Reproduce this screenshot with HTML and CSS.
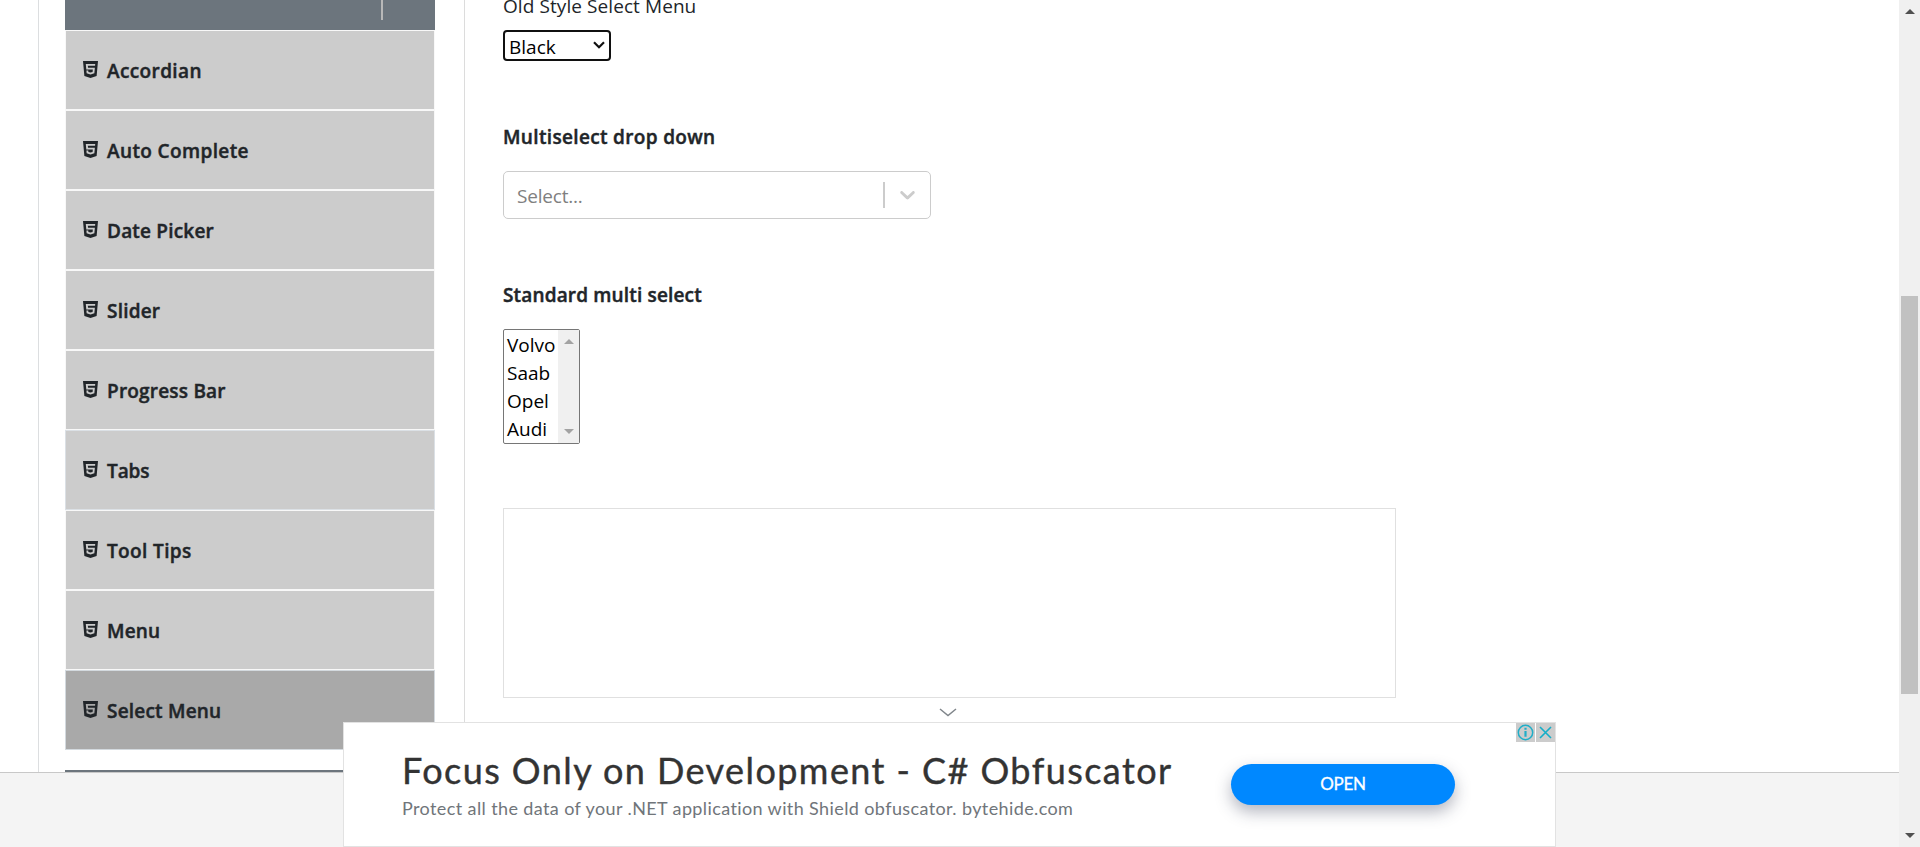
FILE: index.html
```html
<!DOCTYPE html>
<html lang="en">
<head>
<meta charset="utf-8">
<title>Select Menu</title>
<link rel="stylesheet" href="styles.css">
</head>
<body>
<svg class="defs" width="0" height="0" aria-hidden="true">
  <symbol id="html5" viewBox="0 32 384 448" preserveAspectRatio="none"><path d="M0 32l34.9 395.8L191.5 480l157.6-52.2L384 32H0zm308.2 127.9H124.4l4.1 49.4h175.6l-13.6 148.4-97.9 27v.3h-1.1l-98.7-27.3-6-75.8h47.7L138 320l53.5 14.5 53.7-14.5 6-62.2H84.3L71.5 112.2h241.1l-4.4 47.7z"/></symbol>
</svg>
<div class="window">
  <div class="page">
    <div class="main">
      <nav class="sidebar">
        <div class="group-head"><span class="group-divider"></span></div>
        <ul class="menu">
          <li class="item"><svg class="icon"><use href="#html5"/></svg><span class="wide">Accordian</span></li>
          <li class="item"><svg class="icon"><use href="#html5"/></svg><span class="wide">Auto Complete</span></li>
          <li class="item"><svg class="icon"><use href="#html5"/></svg><span>Date Picker</span></li>
          <li class="item"><svg class="icon"><use href="#html5"/></svg><span>Slider</span></li>
          <li class="item"><svg class="icon"><use href="#html5"/></svg><span>Progress Bar</span></li>
          <li class="item visited"><svg class="icon"><use href="#html5"/></svg><span class="tight">Tabs</span></li>
          <li class="item"><svg class="icon"><use href="#html5"/></svg><span class="wide">Tool Tips</span></li>
          <li class="item"><svg class="icon"><use href="#html5"/></svg><span>Menu</span></li>
          <li class="item active"><svg class="icon"><use href="#html5"/></svg><span>Select Menu</span></li>
        </ul>
        <div class="next-group"></div>
      </nav>
      <section class="content">
        <div class="label">Old Style Select Menu</div>
        <div class="old-select"><span>Black</span>
          <svg width="12" height="8" viewBox="0 0 12 8"><path d="M1 1.2l5 5 5-5" fill="none" stroke="#101010" stroke-width="2.2"/></svg>
        </div>
        <div class="heading h-multi">Multiselect drop down</div>
        <div class="combo">
          <span class="placeholder">Select...</span>
          <span class="separator"></span>
          <svg class="combo-arrow" width="25" height="25" viewBox="0 0 20 20"><path fill="#ccc" d="M4.516 7.548c0.436-0.446 1.043-0.481 1.576 0l3.908 3.747 3.908-3.747c0.533-0.481 1.141-0.446 1.574 0 0.436 0.445 0.408 1.197 0 1.615-0.406 0.418-4.695 4.502-4.695 4.502-0.217 0.223-0.502 0.335-0.787 0.335s-0.57-0.112-0.789-0.335c0 0-4.287-4.084-4.695-4.502s-0.436-1.17 0-1.615z"/></svg>
        </div>
        <div class="heading h-standard">Standard multi select</div>
        <div class="listbox">
          <div class="options"><div>Volvo</div><div>Saab</div><div>Opel</div><div>Audi</div></div>
          <div class="list-scroll"><i class="up"></i><i class="down"></i></div>
        </div>
        <div class="frame"></div>
      </section>
    </div>
    <footer class="footer"></footer>
  </div>
  <div class="scrollbar"><i class="up"></i><div class="thumb"></div><i class="down"></i></div>
</div>
<svg class="collapse" width="18" height="9" viewBox="0 0 18 9"><path d="M1 1l8 6.5L17 1" fill="none" stroke="#80868b" stroke-width="1.5"/></svg>
<aside class="ad">
  <div class="ad-text">
    <div class="ad-title">Focus Only on Development - C# Obfuscator</div>
    <div class="ad-sub">Protect all the data of your .NET application with Shield obfuscator. bytehide.com</div>
  </div>
  <div class="ad-button">OPEN</div>
  <div class="ad-controls">
    <svg width="19" height="19" viewBox="0 0 19 19"><circle cx="9.5" cy="9.5" r="7.2" fill="none" stroke="#20aec8" stroke-width="1.5"/><path d="M9.5 8v5.8M9.5 4.8v1.9" stroke="#20aec8" stroke-width="2.2"/></svg>
    <svg width="19" height="19" viewBox="0 0 19 19"><path d="M4 4l11 11M15 4L4 15" fill="none" stroke="#15aec8" stroke-width="1.6"/></svg>
  </div>
</aside>
</body>
</html>
```
FILE: styles.css
```css
* { box-sizing: border-box; }
body { margin: 0; height: 847px; overflow: hidden; background: #fff; color: #212529; font-family: "Open Sans", "Noto Sans", sans-serif; font-size: 19px; line-height: 30px; }
.defs { position: absolute; }
.window { display: flex; height: 847px; }
.page { flex: 1; display: flex; flex-direction: column; }
.main { flex: none; height: 772px; margin-left: 38px; border-left: 1px solid #dcdee0; display: flex; padding-left: 26px; }
.footer { flex: 1; border-top: 1px solid #c8c8c8; background: #f4f4f4; }

.sidebar { width: 370px; display: flex; flex-direction: column; }
.group-head { height: 30px; background: #6c757d; display: flex; justify-content: flex-end; }
.group-divider { width: 2px; height: 20px; margin-right: 52px; background: #b8b8b8; }
.menu { list-style: none; margin: 0; padding: 0; }
.item { height: 80px; padding: 2px 0 0 17px; border: 1px solid #f8f8f8; background: #ccc; display: flex; align-items: center; font-weight: 600; }
.item span { letter-spacing: 0.2px; -webkit-text-stroke: 0.45px #212529; }
.item .wide { letter-spacing: 0.38px; }
.item .tight { letter-spacing: -0.1px; }
.icon { width: 15px; height: 17px; margin: -3px 9px 0 0; fill: #212529; }
.visited { border-color: #dbe0e5; }
.active { background: #a9a9a9; border-color: #d3d9de; }
.next-group { height: 2px; margin-top: 20px; background: #6c757d; }

.content { margin-left: 29px; flex: 1; border-left: 1px solid #dcdcdc; padding-left: 38px; }
.label { height: 30px; margin-top: -9px; white-space: nowrap; letter-spacing: 0.08px; }
.old-select { width: 108px; height: 31px; margin-top: 9px; border: 2px solid #101010; border-radius: 4px; padding: 2px 4px 0; display: flex; align-items: center; justify-content: space-between; color: #000; }
.old-select svg { margin-top: -3px; }
.heading { font-weight: 600; height: 30px; -webkit-text-stroke: 0.45px #212529; }
.h-multi { margin-top: 61px; letter-spacing: 0.34px; }
.combo { width: 428px; height: 48px; margin-top: 19px; border: 1px solid #ccc; border-radius: 5px; display: flex; align-items: center; color: #808080; }
.placeholder { flex: 1; padding: 1px 0 0 13px; letter-spacing: -0.2px; }
.separator { width: 2px; height: 26px; background: #ccc; }
.combo-arrow { margin: -1px 10px 0; }
.h-standard { margin-top: 61px; letter-spacing: 0.16px; }
.listbox { width: 77px; height: 115px; margin-top: 19px; border: 1px solid #767676; border-radius: 2px; display: flex; color: #000; }
.options { flex: 1; padding: 1px 0 0 3px; line-height: 28px; white-space: nowrap; }
.list-scroll { width: 21px; background: #f0f0f0; display: flex; flex-direction: column; align-items: center; justify-content: space-between; padding: 9px 0; }
.up, .down { border-left: 5px solid transparent; border-right: 5px solid transparent; }
.up { border-bottom: 5px solid #505050; }
.down { border-top: 5px solid #505050; }
.list-scroll .up { border-bottom-color: #a3a3a3; }
.list-scroll .down { border-top-color: #a3a3a3; }
.frame { width: 893px; height: 190px; margin-top: 64px; border: 1px solid #e0e0e0; }

.scrollbar { width: 21px; background: #f0f0f0; display: flex; flex-direction: column; align-items: center; padding: 9px 0; }
.thumb { width: 17px; height: 398px; margin: 282px 0 auto; background: #c1c1c1; }

.collapse { position: absolute; left: 939px; top: 708px; }
.ad { position: absolute; left: 343px; top: 722px; width: 1213px; height: 125px; border: 1px solid #e2e2e2; background: #fff; padding-left: 58px; display: flex; font-family: Lato, sans-serif; }
.ad-text { width: 829px; padding-top: 22px; white-space: nowrap; }
.ad-title { height: 50px; line-height: 50px; font-size: 36px; letter-spacing: 1.43px; color: #333; -webkit-text-stroke: 0.4px #333; }
.ad-sub { height: 26px; line-height: 26px; font-size: 18px; letter-spacing: 0.39px; color: #70757a; }
.ad-button { width: 224px; height: 41px; margin-top: 41px; border-radius: 21px; background: #0088ff; color: #fff; font-size: 17px; letter-spacing: -0.3px; line-height: 40px; text-align: center; -webkit-text-stroke: 0.3px #fff; box-shadow: 0 7px 16px rgba(40, 45, 75, 0.35); }
.ad-controls { position: absolute; top: 0; right: 0; display: flex; gap: 1px; }
.ad-controls svg { background: #ccc; }
```
